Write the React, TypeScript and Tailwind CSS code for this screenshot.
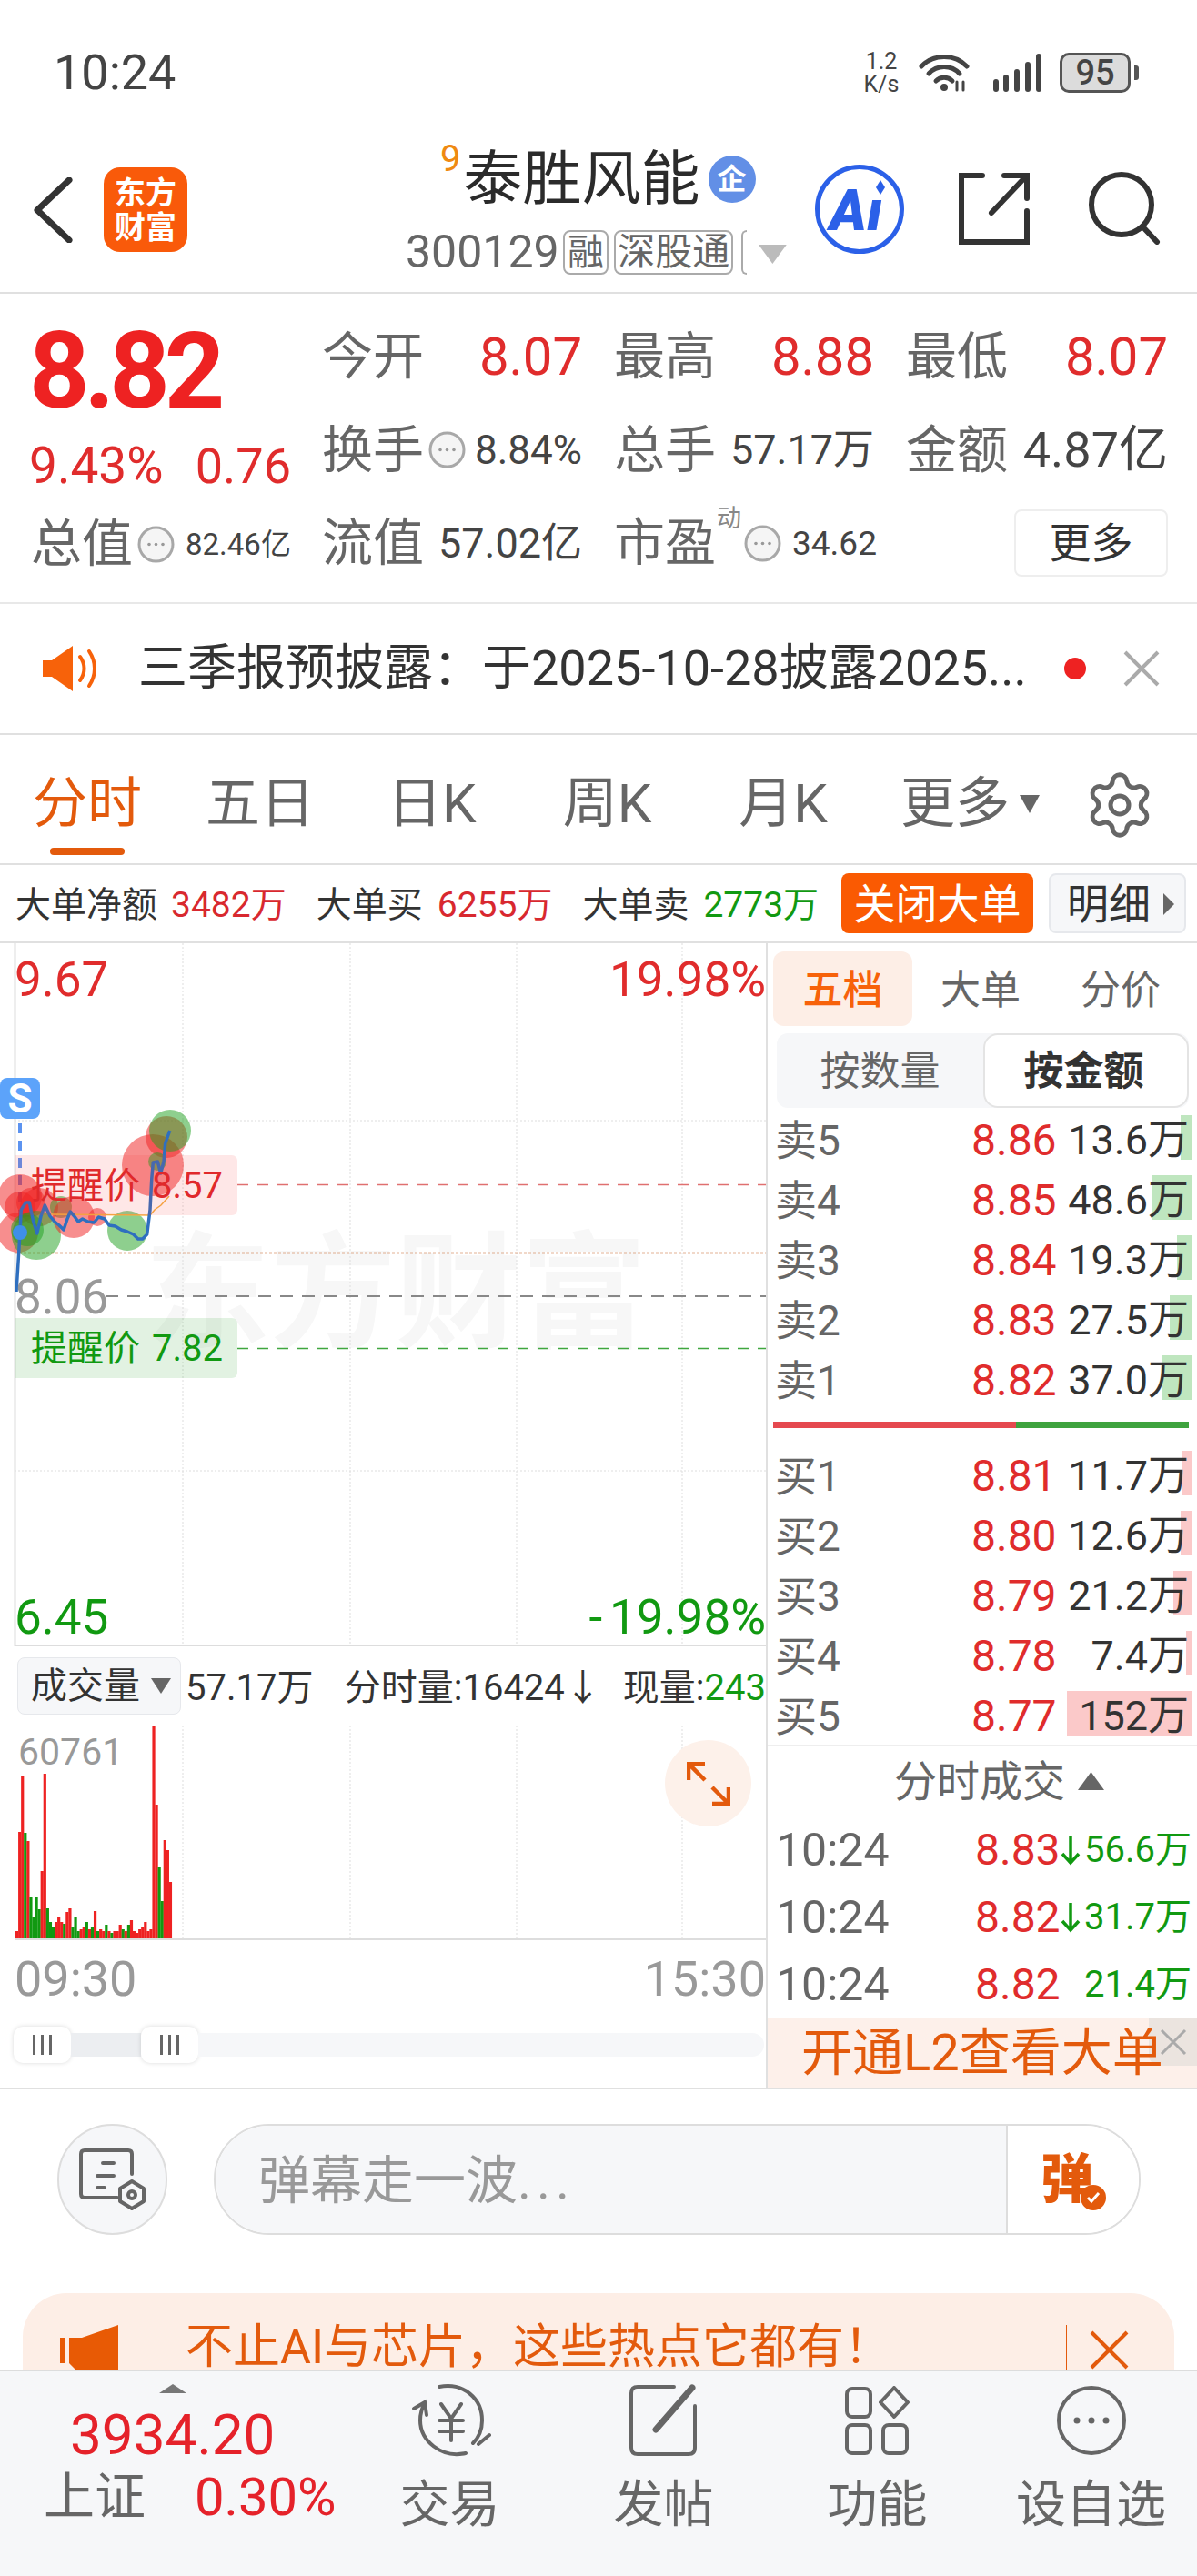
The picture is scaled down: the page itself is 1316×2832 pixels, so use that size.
import React from 'react';
import { Settings } from 'lucide-react';

const SELL = [
  { label: '卖5', price: '8.86', vol: '13.6万', bar: 12 },
  { label: '卖4', price: '8.85', vol: '48.6万', bar: 43 },
  { label: '卖3', price: '8.84', vol: '19.3万', bar: 16 },
  { label: '卖2', price: '8.83', vol: '27.5万', bar: 24 },
  { label: '卖1', price: '8.82', vol: '37.0万', bar: 33 },
];

const BUY = [
  { label: '买1', price: '8.81', vol: '11.7万', bar: 10 },
  { label: '买2', price: '8.80', vol: '12.6万', bar: 12 },
  { label: '买3', price: '8.79', vol: '21.2万', bar: 20 },
  { label: '买4', price: '8.78', vol: '7.4万', bar: 6 },
  { label: '买5', price: '8.77', vol: '152万', bar: 137 },
];

const TRADES = [
  { price: '8.83', arrow: true, vol: '56.6万' },
  { price: '8.82', arrow: true, vol: '31.7万' },
  { price: '8.82', arrow: false, vol: '21.4万' },
];

// [height, r/g] for each minute bar
const BARS: [number, string][] = [
  [8, 'r'], [117, 'r'], [179, 'r'], [116, 'g'], [107, 'r'], [45, 'g'], [23, 'g'], [45, 'g'], [32, 'g'], [74, 'r'], [181, 'r'],
  [33, 'g'], [18, 'g'], [13, 'g'], [18, 'r'], [23, 'r'], [18, 'r'], [16, 'g'], [29, 'r'], [33, 'r'], [13, 'g'], [23, 'g'],
  [8, 'g'], [10, 'r'], [13, 'r'], [18, 'g'], [10, 'r'], [13, 'g'], [30, 'r'], [8, 'g'], [10, 'r'], [8, 'r'], [15, 'g'],
  [8, 'r'], [6, 'g'], [8, 'r'], [8, 'r'], [15, 'r'], [10, 'g'], [8, 'r'], [15, 'g'], [20, 'r'], [8, 'r'], [6, 'r'], [10, 'r'],
  [13, 'r'], [18, 'r'], [8, 'r'], [10, 'r'], [235, 'r'], [147, 'r'], [79, 'g'], [41, 'g'], [108, 'r'], [97, 'r'], [62, 'r'],
];

const PRICE_LINE =
  '18,1420 20.7,1377 22,1353 23.3,1330 28.3,1322 32.3,1322 36.7,1343 40.7,1356 45,1337 49.3,1325 55,1337 60,1343 65,1347 70,1352 74,1340 77.3,1332 81.7,1337 86,1343 90.7,1340 96.7,1343 103.3,1344 108.3,1338 115,1340 120,1347 126.7,1348 133.3,1352 140,1354 146.7,1357 151.7,1362 156.7,1362 161.7,1357 165,1330 166.7,1297 168.3,1278 173.3,1277 176.7,1290 180,1277 181.7,1257 186.7,1243';

const DOTS = [
  { x: 22, y: 1315, r: 24, c: 'r' },
  { x: 22, y: 1327, r: 17, c: 'r' },
  { x: 43, y: 1327, r: 21, c: 'r' },
  { x: 34, y: 1322, r: 16, c: 'r' },
  { x: 20, y: 1355, r: 22, c: 'r' },
  { x: 40, y: 1358, r: 27, c: 'g' },
  { x: 30, y: 1352, r: 18, c: 'g' },
  { x: 67, y: 1327, r: 12, c: 'g' },
  { x: 81, y: 1338, r: 23, c: 'r' },
  { x: 107, y: 1338, r: 10, c: 'r' },
  { x: 140, y: 1353, r: 22, c: 'g' },
  { x: 168, y: 1281, r: 34, c: 'r' },
  { x: 183, y: 1250, r: 23, c: 'r' },
  { x: 187, y: 1243, r: 23, c: 'g' },
  { x: 173, y: 1277, r: 10, c: 'g' },
];

const DotCircle: React.FC<{ className?: string }> = ({ className }) => (
  <svg className={`shrink-0 ${className ?? ''}`} viewBox="0 0 41 41" width="41" height="41">
    <circle cx="20.5" cy="20.5" r="18.5" fill="#f5f5f5" stroke="#a8a8a8" strokeWidth="3" />
    <circle cx="13" cy="20.5" r="1.8" fill="#999" />
    <circle cx="20.5" cy="20.5" r="1.8" fill="#999" />
    <circle cx="28" cy="20.5" r="1.8" fill="#999" />
  </svg>
);

const StatusBar = () => (
  <div className="flex h-[156px] items-center justify-between pl-[59px] pr-[64px] pt-[3px] text-[#444]">
    <span className="text-[54px] leading-none">10:24</span>
    <div className="flex items-center">
      <div className="flex w-[42px] flex-col items-center text-[25px] leading-[25px]">
        <span>1.2</span>
        <span>K/s</span>
      </div>
      <svg className="ml-[20px]" width="56" height="42" viewBox="0 0 56 42" fill="none" stroke="#444" strokeLinecap="round">
        <path d="M3 14 C16 0 40 0 53 14" strokeWidth="5" />
        <path d="M11 22 C20 12 36 12 45 22" strokeWidth="5" />
        <path d="M19 30 C24 25 32 25 37 30" strokeWidth="5" />
        <circle cx="28" cy="37" r="4" fill="#444" stroke="none" />
        <path d="M42 31 V40 M49 31 V40" strokeWidth="3" />
      </svg>
      <svg className="ml-[26px]" width="53" height="42" viewBox="0 0 53 42" fill="#444">
        <rect x="0" y="28" width="6" height="14" rx="3" />
        <rect x="11" y="23" width="6" height="19" rx="3" />
        <rect x="23" y="17" width="6" height="25" rx="3" />
        <rect x="35" y="9" width="6" height="33" rx="3" />
        <rect x="47" y="0" width="6" height="42" rx="3" />
      </svg>
      <div className="ml-[20px] flex h-[44px] w-[78px] items-center justify-center rounded-[10px] border-[3px] border-[#555] bg-[#dcdcdc] text-[38px] font-medium leading-none">
        95
      </div>
      <div className="ml-[4px] h-[16px] w-[5px] rounded-r-[3px] bg-[#555]" />
    </div>
  </div>
);

const Header = () => (
  <div className="flex h-[167px] items-start border-b-2 border-[#e0e0e0]">
    <svg className="ml-[36px] mt-[39px]" width="44" height="72" viewBox="0 0 44 72" fill="none" stroke="#333" strokeWidth="7" strokeLinecap="round" strokeLinejoin="round">
      <polyline points="40,3 5,36 40,69" />
    </svg>
    <div className="ml-[34px] mt-[28px] flex h-[93px] w-[92px] flex-col items-center justify-center rounded-[18px] bg-[#f95a0a] text-[34px] font-bold leading-[38px] text-white">
      <span>东方</span>
      <span>财富</span>
    </div>
    <div className="ml-[240px] w-[419px]">
      <div className="flex h-[97px] items-start pl-[38px]">
        <span className="mr-[3px] text-[40px] leading-[38px] text-[#ef8a12]">9</span>
        <span className="mt-[5px] text-[65px] leading-[72px] text-[#2b2b2b]">泰胜风能</span>
        <span className="ml-[9px] mt-[15px] flex h-[52px] w-[52px] items-center justify-center rounded-full bg-[#628fe6] text-[32px] font-bold leading-none text-white">
          企
        </span>
      </div>
      <div className="flex items-center text-[#666]">
        <span className="text-[50px] leading-[49px]">300129</span>
        <span className="ml-[4px] flex h-[49px] w-[51px] items-center justify-center rounded-[8px] border-2 border-[#aaa] text-[40px] leading-none">融</span>
        <span className="ml-[6px] flex h-[49px] w-[132px] items-center justify-center rounded-[8px] border-2 border-[#aaa] text-[41px] leading-none">深股通</span>
        <span className="ml-[9px] h-[49px] w-[6px] rounded-l-[8px] border-y-2 border-l-2 border-[#aaa]" />
        <svg className="ml-[13px] mt-[4px]" width="31" height="21" viewBox="0 0 31 21" fill="#bbb">
          <polygon points="0,0 31,0 15.5,21" />
        </svg>
      </div>
    </div>
    <svg className="ml-[31px] mt-[25px]" width="98" height="98" viewBox="0 0 98 98">
      <circle cx="49" cy="49" r="46.5" fill="#fff" stroke="#2b60e8" strokeWidth="5" />
      <text x="16" y="72" fontSize="62" fontWeight="900" fontStyle="italic" fill="#2b60e8" fontFamily="Roboto">Aı</text>
      <polygon points="72,17 77,25 72,33 67,25" fill="#2b60e8" />
    </svg>
    <svg className="ml-[60px] mt-[34px]" width="78" height="79" viewBox="0 0 78 79" fill="none" stroke="#333" strokeWidth="6" strokeLinecap="round">
      <path d="M26 3 H3 V76 H75 V42" />
      <path d="M36 44 L72 6" />
      <path d="M50 3 H75 V28" />
    </svg>
    <svg className="ml-[64px] mt-[33px]" width="80" height="80" viewBox="0 0 80 80" fill="none" stroke="#333" strokeWidth="6" strokeLinecap="round">
      <circle cx="37" cy="36" r="33" />
      <path d="M60 60 L76 77" />
    </svg>
  </div>
);

const QuoteCell: React.FC<{ label: string; children: React.ReactNode }> = ({ label, children }) => (
  <div className="flex h-[102.5px] items-center justify-between whitespace-nowrap">
    <span className="shrink-0 text-[56px] leading-none text-[#666]">{label}</span>
    {children}
  </div>
);

const Quote = () => {
  const red = 'text-[58px] leading-none text-[#e02c2c]';
  return (
    <div className="flex h-[341px] border-b-2 border-[#e8e8e8] pl-[34px] pt-[18px]">
      <div className="w-[286px] shrink-0">
        <div className="-ml-[2px] flex h-[134px] items-center text-[116px] font-bold leading-none tracking-[-6px] text-[#ee2222]">8.82</div>
        <div className="-ml-[2px] flex h-[72px] items-center justify-between pt-[3px] leading-none text-[#e02c2c]">
          <span className="text-[55px]">9.43%</span>
          <span className="text-[54px]">0.76</span>
        </div>
        <div className="flex h-[102px] items-center whitespace-nowrap">
          <span className="shrink-0 text-[56px] leading-none text-[#666]">总值</span>
          <DotCircle className="ml-[5px]" />
          <span className="ml-[12px] text-[33px] leading-none text-[#444]">82.46亿</span>
        </div>
      </div>
      <div className="ml-[34px] grid grid-cols-[286px_286px_288px] content-start gap-x-[35px]">
        <QuoteCell label="今开"><span className={red}>8.07</span></QuoteCell>
        <QuoteCell label="最高"><span className={red}>8.88</span></QuoteCell>
        <QuoteCell label="最低"><span className={red}>8.07</span></QuoteCell>
        <QuoteCell label="换手">
          <DotCircle className="ml-[5px]" />
          <span className="ml-auto text-[44px] leading-none text-[#444]">8.84%</span>
        </QuoteCell>
        <QuoteCell label="总手"><span className="text-[45px] leading-none text-[#444]">57.17万</span></QuoteCell>
        <QuoteCell label="金额"><span className="text-[54px] leading-none text-[#444]">4.87亿</span></QuoteCell>
        <QuoteCell label="流值"><span className="text-[45px] leading-none text-[#444]">57.02亿</span></QuoteCell>
        <div className="flex h-[102.5px] items-center whitespace-nowrap">
          <span className="shrink-0 text-[56px] leading-none text-[#666]">市盈</span>
          <span className="mb-[54px] ml-[1px] w-[30px] shrink-0 text-[27px] leading-none text-[#888]">动</span>
          <DotCircle />
          <span className="ml-[12px] text-[37px] leading-none text-[#444]">34.62</span>
        </div>
        <div className="flex h-[102.5px] items-center justify-end">
          <span className="flex h-[74px] w-[169px] items-center justify-center rounded-[8px] border-2 border-[#eee] text-[46px] leading-none text-[#333]">更多</span>
        </div>
      </div>
    </div>
  );
};

const Notice = () => (
  <div className="flex h-[144px] items-center border-b-2 border-[#e0e0e0] pl-[47px]">
    <svg width="60" height="50" viewBox="0 0 60 50" fill="#f7620a">
      <path d="M0 16 H10 L33 0 V50 L10 34 H0 Z" />
      <path d="M41 12 C47 20 47 30 41 38" fill="none" stroke="#f7620a" strokeWidth="4" strokeLinecap="round" />
      <path d="M51 6 C59 18 59 32 51 44" fill="none" stroke="#f7620a" strokeWidth="4" strokeLinecap="round" />
    </svg>
    <span className="ml-[45px] w-[1018px] whitespace-nowrap text-[54px] leading-none text-[#333]">三季报预披露：于2025-10-28披露2025...</span>
    <span className="h-[24px] w-[24px] rounded-full bg-[#ee2222]" />
    <svg className="ml-[41px]" width="40" height="40" viewBox="0 0 40 40" fill="none" stroke="#aaa" strokeWidth="4">
      <path d="M2 2 L38 38 M38 2 L2 38" />
    </svg>
  </div>
);

const Tabs = () => (
  <div className="flex h-[143px] items-start border-b-2 border-[#e0e0e0] pt-[41px] text-[60px] leading-[70px] text-[#666]">
    <div className="ml-[36px] flex w-[120px] flex-col items-center text-[#e35a0c]">
      <span>分时</span>
      <span className="mt-[13px] h-[8px] w-[82px] rounded-full bg-[#e35a0c]" />
    </div>
    <span className="ml-[70px]">五日</span>
    <span className="ml-[80px]">日K</span>
    <span className="ml-[95px]">周K</span>
    <span className="ml-[96px]">月K</span>
    <span className="ml-[80px]">更多</span>
    <svg className="ml-[11px] mt-[25px]" width="22" height="20" viewBox="0 0 22 20" fill="#666">
      <polygon points="0,0 22,0 11,20" />
    </svg>
    <Settings className="ml-[48px] -mt-[4px]" size={80} strokeWidth={1.5} color="#666" />
  </div>
);

const BigOrderBar = () => (
  <div className="flex h-[86px] items-center border-b-2 border-[#e0e0e0] pl-[17px] text-[39px] leading-none text-[#333]">
    <span className="mt-[5px]">大单净额</span>
    <span className="ml-[15px] mt-[5px] text-[#d8282f]">3482万</span>
    <span className="ml-[33px] mt-[5px]">大单买</span>
    <span className="ml-[16px] mt-[5px] text-[#d8282f]">6255万</span>
    <span className="ml-[33px] mt-[5px]">大单卖</span>
    <span className="ml-[16px] mt-[5px] text-[#119911]">2773万</span>
    <span className="ml-[25px] flex h-[66px] w-[211px] shrink-0 items-center justify-center rounded-[8px] bg-[#fa5a02] pt-[2px] text-[46px] text-white">关闭大单</span>
    <span className="ml-[17px] flex h-[66px] w-[151px] shrink-0 items-center rounded-[8px] border-2 border-[#e6e8ec] bg-[#f6f7f9] pl-[18px] pt-[2px] text-[46px]">
      明细
      <svg className="ml-[14px]" width="12" height="24" viewBox="0 0 12 24" fill="#666">
        <polygon points="0,0 12,12 0,24" />
      </svg>
    </span>
  </div>
);

const PriceChart = () => (
  <div className="relative h-[773px] overflow-hidden">
    <span className="absolute left-[159px] top-[317px] whitespace-nowrap text-[138px] font-bold leading-none text-[#f7f7f7]">东方财富</span>
    <svg className="absolute inset-0" width="843" height="773" viewBox="0 1037 843 773" fill="none">
      {[201, 385, 568, 750].map((x) => (
        <line key={x} x1={x} y1="1037" x2={x} y2="1810" stroke="#ddd" strokeWidth="1" strokeDasharray="2 2" />
      ))}
      <line x1="16" y1="1232" x2="842" y2="1232" stroke="#ddd" strokeDasharray="2 2" />
      <line x1="16" y1="1617" x2="842" y2="1617" stroke="#ddd" strokeDasharray="2 2" />
      <line x1="16.5" y1="1037" x2="16.5" y2="1810" stroke="#ddd" strokeWidth="2" />
      <line x1="16" y1="1809" x2="842" y2="1809" stroke="#ddd" strokeWidth="2" />
      <line x1="261" y1="1302.5" x2="842" y2="1302.5" stroke="#e07070" strokeWidth="1.5" strokeDasharray="12 10" />
      <line x1="16" y1="1377.5" x2="842" y2="1377.5" stroke="#c8642a" strokeWidth="1.5" strokeDasharray="3 2" />
      <line x1="116" y1="1425" x2="842" y2="1425" stroke="#888" strokeWidth="2" strokeDasharray="14 10" />
      <line x1="261" y1="1482.5" x2="842" y2="1482.5" stroke="#3fa63f" strokeWidth="1.5" strokeDasharray="12 10" />
      <line x1="22" y1="1235" x2="22" y2="1345" stroke="#5c93f0" strokeWidth="4" strokeDasharray="11 8" />
      {DOTS.map((d, i) => (
        <circle key={i} cx={d.x} cy={d.y} r={d.r} fill={d.c === 'r' ? 'rgba(240,30,30,0.5)' : 'rgba(30,160,30,0.5)'} />
      ))}
      <polyline points="56,1335 165,1336 170,1330 177,1325 186,1315" stroke="#f5b042" strokeWidth="1.5" />
      <polyline points={PRICE_LINE} stroke="#2f6fbf" strokeWidth="3.5" strokeLinejoin="round" />
      <circle cx="22" cy="1355" r="8" fill="#3f8fe8" />
    </svg>
    <span className="absolute left-0 top-[148px] flex h-[45px] w-[44px] items-center justify-center rounded-[8px] bg-[#5ca3fa] text-[44px] font-bold leading-none text-white">S</span>
    <span className="absolute left-[16px] top-[14px] text-[53px] leading-none text-[#e02c2c]">9.67</span>
    <span className="absolute right-0 top-[14px] text-[53px] leading-none text-[#e02c2c]">19.98%</span>
    <span className="absolute left-[16px] top-[363px] text-[53px] leading-none text-[#999]">8.06</span>
    <span className="absolute left-[16px] top-[715px] text-[53px] leading-none text-[#119911]">6.45</span>
    <span className="absolute right-0 top-[715px] text-[53px] leading-none text-[#119911]"><span className="tracking-[8px]">-</span>19.98%</span>
    <div className="absolute left-[16px] top-[233px] flex h-[66px] w-[245px] items-center gap-[13px] rounded-r-[6px] bg-[rgba(250,60,60,0.12)] pl-[18px] pt-[2px] text-[40px] leading-none text-[#e0292b]">
      <span>提醒价</span>
      <span>8.57</span>
    </div>
    <div className="absolute left-[16px] top-[412px] flex h-[66px] w-[245px] items-center gap-[13px] rounded-r-[6px] bg-[rgba(20,150,20,0.12)] pl-[18px] pt-[2px] text-[40px] leading-none text-[#119911]">
      <span>提醒价</span>
      <span>7.82</span>
    </div>
  </div>
);

const VolumeHeader = () => (
  <div className="flex h-[87px] items-center whitespace-nowrap pl-[19px] text-[40px] leading-none text-[#333]">
    <div className="flex h-[63px] w-[182px] items-center rounded-[8px] border border-[#e6e8ec] bg-[#f6f7f9] pl-[14px]">
      成交量
      <svg className="ml-[12px]" width="22" height="17" viewBox="0 0 22 17" fill="#666">
        <polygon points="0,0 22,0 11,17" />
      </svg>
    </div>
    <span className="ml-[5px] mt-[5px] w-[175px]">57.17万</span>
    <span className="mt-[5px] w-[312px] pl-[2px]">分时量:16424↓</span>
    <span className="mt-[5px]">现量:<span className="text-[#119911]">243</span></span>
  </div>
);

const VolumeChart = () => (
  <div className="relative h-[236px]">
    <svg className="absolute inset-0" width="843" height="236" viewBox="0 1897 843 236" fill="none">
      {[201, 385, 568, 750].map((x) => (
        <line key={x} x1={x} y1="1897" x2={x} y2="2133" stroke="#ddd" strokeDasharray="2 2" />
      ))}
      <line x1="16" y1="1897.5" x2="842" y2="1897.5" stroke="#ddd" />
      <line x1="16" y1="2132" x2="842" y2="2132" stroke="#ddd" strokeWidth="2" />
      {BARS.map(([h, c], i) => (
        <rect key={i} x={17 + i * 3.07} y={2131 - h} width="3.2" height={h} fill={c === 'r' ? '#ee2222' : '#119911'} />
      ))}
    </svg>
    <span className="absolute left-[20px] top-[9px] text-[41px] leading-none text-[#999]">60761</span>
    <div className="absolute left-[731px] top-[16px] flex h-[95px] w-[95px] items-center justify-center rounded-full bg-[#fdf1ea]">
      <svg width="48" height="48" viewBox="0 0 48 48" fill="none" stroke="#e35a0c" strokeWidth="4.5">
        <path d="M2 20 V2 H20 M2 2 L20 20" />
        <path d="M46 28 V46 H28 M46 46 L28 28" />
      </svg>
    </div>
  </div>
);

const Handle = () => (
  <div className="flex h-[40px] w-[63px] shrink-0 items-center justify-center gap-[6px] rounded-[10px] bg-white shadow-[0_0_5px_rgba(0,0,0,0.15)]">
    <span className="h-[22px] w-[3px] bg-[#666]" />
    <span className="h-[22px] w-[3px] bg-[#666]" />
    <span className="h-[22px] w-[3px] bg-[#666]" />
  </div>
);

const LeftPanel = () => (
  <div className="w-[844px] shrink-0 border-r-2 border-[#e0e0e0]">
    <PriceChart />
    <VolumeHeader />
    <VolumeChart />
    <div className="flex h-[86px] items-center justify-between pl-[16px] pr-0 text-[54px] leading-none text-[#999]">
      <span>09:30</span>
      <span>15:30</span>
    </div>
    <div className="ml-[15px] mt-[9px] flex w-[825px] items-center">
      <Handle />
      <div className="h-[26px] w-[77px] bg-[#eceef1]" />
      <Handle />
      <div className="h-[26px] flex-1 rounded-r-full bg-[#f6f7f9]" />
    </div>
  </div>
);

const OrderRow: React.FC<{ label: string; price: string; vol: string; bar: number; barColor: string }> = ({ label, price, vol, bar, barColor }) => (
  <div className="relative flex h-[66px] items-center pl-[8px] pr-[9px] pt-[3px] text-[46px] leading-none">
    <div className={`absolute right-[6px] top-[7px] h-[49px] ${barColor}`} style={{ width: bar }} />
    <span className="relative w-[216px] text-[#666]">{label}</span>
    <span className="relative text-[48px] text-[#e02c2c]">{price}</span>
    <span className="relative flex-1 text-right text-[45px] text-[#333]">{vol}</span>
  </div>
);

const RightPanel = () => (
  <div className="flex flex-1 flex-col">
    <div className="ml-[6px] mt-[9px] flex h-[82px] items-center text-[44px] leading-none text-[#666]">
      <span className="flex h-[82px] w-[153px] items-center justify-center rounded-[12px] bg-[#fdeee6] pt-[3px] font-medium text-[#f7620a]">五档</span>
      <span className="ml-[31px] pt-[3px]">大单</span>
      <span className="ml-[66px] pt-[3px]">分价</span>
    </div>
    <div className="ml-[10px] mt-[8px] flex h-[82px] w-[453px] items-center rounded-[12px] bg-[#f6f7f9] text-[44px] leading-none">
      <span className="flex w-[227px] justify-center pt-[2px] text-[#666]">按数量</span>
      <span className="flex h-[82px] flex-1 items-center justify-center rounded-[16px] border-2 border-[#e4e4e4] bg-white pr-[5px] pt-[2px] font-bold text-[#333]">按金额</span>
    </div>
    <div className="mt-[1px]">
      {SELL.map((r) => (
        <OrderRow key={r.label} {...r} barColor="bg-[#bfe6bf]" />
      ))}
    </div>
    <div className="ml-[6px] mt-[14px] flex h-[7px] w-[457px]">
      <div className="w-[267px] bg-[#e5494f]" />
      <div className="flex-1 bg-[#3ea33e]" />
    </div>
    <div className="mt-[18px] border-b-2 border-[#eee]">
      {BUY.map((r) => (
        <OrderRow key={r.label} {...r} barColor="bg-[#fbc9c9]" />
      ))}
    </div>
    <div className="flex h-[76px] items-center pl-[139px] text-[47px] leading-none text-[#666]">
      分时成交
      <svg className="ml-[14px]" width="29" height="20" viewBox="0 0 29 20" fill="#666">
        <polygon points="14.5,0 29,20 0,20" />
      </svg>
    </div>
    {TRADES.map((t, i) => (
      <div key={i} className="flex h-[74px] items-center pl-[9px] pt-[2px] leading-none">
        <span className="w-[219px] text-[50px] text-[#666]">10:24</span>
        <span className="w-[94px] text-[48px] text-[#e02c2c]">{t.price}</span>
        <span className="w-[26px] text-[#119911]">
          {t.arrow && (
            <svg width="22" height="34" viewBox="0 0 22 34" fill="none" stroke="#119911" strokeWidth="3.5">
              <path d="M11 1 V31 M2 21 L11 31 L20 21" />
            </svg>
          )}
        </span>
        <span className="text-[40px] text-[#119911]">{t.vol}</span>
      </div>
    ))}
    <div className="relative flex flex-1 items-center bg-[#fdf0ea] pl-[37px] text-[56px] leading-none text-[#e35a0c]">
      <div className="absolute right-0 top-0 flex h-[53px] w-[53px] items-center justify-center rounded-bl-[12px] bg-[#ebe4df]">
        <svg width="30" height="30" viewBox="0 0 30 30" fill="none" stroke="#aaa" strokeWidth="3">
          <path d="M2 2 L28 28 M28 2 L2 28" />
        </svg>
      </div>
      <span className="relative">开通L2查看大单</span>
    </div>
  </div>
);

const Danmu = () => (
  <div className="flex h-[224px] items-start pl-[63px] pt-[38px]">
    <div className="flex h-[122px] w-[121px] items-center justify-center rounded-full border-2 border-[#ddd] bg-[#f6f7f9]">
      <svg width="74" height="68" viewBox="0 0 74 68" fill="none" stroke="#666" strokeWidth="4" strokeLinecap="round">
        <path d="M58 28 V6 Q58 2 54 2 H6 Q2 2 2 6 V50 Q2 54 6 54 H42" />
        <path d="M26 16 H38 M20 30 H38 M20 43 H28" />
        <polygon points="58,36 71,44 71,58 58,66 45,58 45,44" strokeLinejoin="round" />
        <circle cx="58" cy="51" r="4" />
      </svg>
    </div>
    <div className="ml-[51px] flex h-[122px] w-[1019px] overflow-hidden rounded-full border-2 border-[#ddd]">
      <div className="flex flex-1 items-center bg-[#f6f7f9] pl-[47px] pt-[3px] text-[57px] leading-none text-[#999]">
        弹幕走一波<span className="tracking-[6px]">...</span>
      </div>
      <div className="flex w-[146px] items-center border-l-2 border-[#ddd] bg-white pl-[36px]">
        <span className="text-[58px] font-black leading-none text-[#e35a0c]">弹</span>
        <span className="-ml-[14px] mt-[40px] flex h-[28px] w-[28px] items-center justify-center rounded-full bg-[#e35a0c]">
          <svg width="16" height="14" viewBox="0 0 16 14" fill="none" stroke="#fff" strokeWidth="3">
            <path d="M2 7 L6 11 L14 2" />
          </svg>
        </span>
      </div>
    </div>
  </div>
);

const Banner = () => (
  <div className="mx-[25px] h-[84px] overflow-hidden rounded-t-[48px] bg-[#fdeee6] pl-[41px] pt-[35px] text-[#e35a0c]">
    <div className="flex items-start">
      <svg width="64" height="60" viewBox="0 0 64 60" fill="#e85a05">
        <path d="M0 14 H6 V42 H0 Z M10 14 H24 L64 0 V60 L40 54 L36 60 L30 52 L24 56 L10 42 Z" />
      </svg>
      <span className="ml-[74px] w-[968px] whitespace-nowrap text-[52px] leading-[50px]">不止AI与芯片，这些热点它都有！</span>
      <span className="h-[60px] w-px bg-[#e35a0c]" />
      <svg className="ml-[25px] mt-[6px]" width="43" height="43" viewBox="0 0 43 43" fill="none" stroke="#e35a0c" strokeWidth="4">
        <path d="M2 2 L41 41 M41 2 L2 41" />
      </svg>
    </div>
  </div>
);

const NavIcon: React.FC<{ label: string; children: React.ReactNode }> = ({ label, children }) => (
  <div className="flex w-[235px] shrink-0 flex-col items-center">
    <div className="flex h-[80px] items-center justify-center">{children}</div>
    <span className="mt-[25px] text-[55px] leading-none text-[#666]">{label}</span>
  </div>
);

const BottomNav = () => (
  <div className="flex flex-1 items-start border-t-2 border-[#ddd] bg-[#f6f7f9] pt-[14px]">
    <div className="w-[377px] shrink-0 pl-[48px]">
      <div className="ml-[127px] h-0 w-0 border-x-[15px] border-b-[10px] border-x-transparent border-b-[#777]" />
      <div className="ml-[29px] mt-[15px] text-[62px] leading-none text-[#e5222a]">3934.20</div>
      <div className="mt-[2px] flex items-center whitespace-nowrap">
        <span className="text-[56px] leading-[70px] text-[#666]">上证</span>
        <span className="ml-[54px] text-[58px] leading-none text-[#e5222a]">0.30%</span>
      </div>
    </div>
    <NavIcon label="交易">
      <svg width="90" height="80" viewBox="0 0 90 80" fill="none" stroke="#666" strokeWidth="4" strokeLinecap="round">
        <path d="M33 3 C60 -2 80 16 80 40 C80 52 75 60 70 65" />
        <path d="M62 76 C35 82 12 62 12 40 C12 32 14 26 17 21" />
        <path d="M5 27 L17 20 L19 34" />
        <path d="M88 56 L76 66" />
        <path d="M35 22 L46 38 L57 22 M33 40 H59 M33 52 H59 M46 38 V62" />
      </svg>
    </NavIcon>
    <NavIcon label="发帖">
      <svg width="78" height="80" viewBox="0 0 78 80" fill="none" stroke="#666" strokeWidth="4" strokeLinecap="round">
        <path d="M50 3 H10 Q3 3 3 10 V70 Q3 77 10 77 H66 Q73 77 73 70 V24" />
        <path d="M30 50 L70 4" strokeWidth="7" />
      </svg>
    </NavIcon>
    <NavIcon label="功能">
      <svg width="72" height="76" viewBox="0 0 72 76" fill="none" stroke="#666" strokeWidth="4">
        <rect x="2" y="3" width="26" height="31" rx="6" />
        <polygon points="54,2 69,18 54,34 39,18" strokeLinejoin="round" />
        <rect x="2" y="43" width="26" height="31" rx="6" />
        <rect x="42" y="43" width="26" height="31" rx="6" />
      </svg>
    </NavIcon>
    <NavIcon label="设自选">
      <svg width="78" height="78" viewBox="0 0 78 78" fill="none" stroke="#666" strokeWidth="4">
        <circle cx="39" cy="39" r="36" />
        <circle cx="23" cy="39" r="3.5" fill="#666" stroke="none" />
        <circle cx="39" cy="39" r="3.5" fill="#666" stroke="none" />
        <circle cx="55" cy="39" r="3.5" fill="#666" stroke="none" />
      </svg>
    </NavIcon>
  </div>
);

const App: React.FC = () => {
  return (
    <div className="flex h-[2832px] w-[1316px] flex-col overflow-hidden bg-white [font-family:Roboto,'Noto_Sans_CJK_SC',sans-serif]">
      <StatusBar />
      <Header />
      <Quote />
      <Notice />
      <Tabs />
      <BigOrderBar />
      <div className="flex h-[1260px] border-b-2 border-[#e0e0e0]">
        <LeftPanel />
        <RightPanel />
      </div>
      <Danmu />
      <Banner />
      <BottomNav />
    </div>
  );
};

export default App;
